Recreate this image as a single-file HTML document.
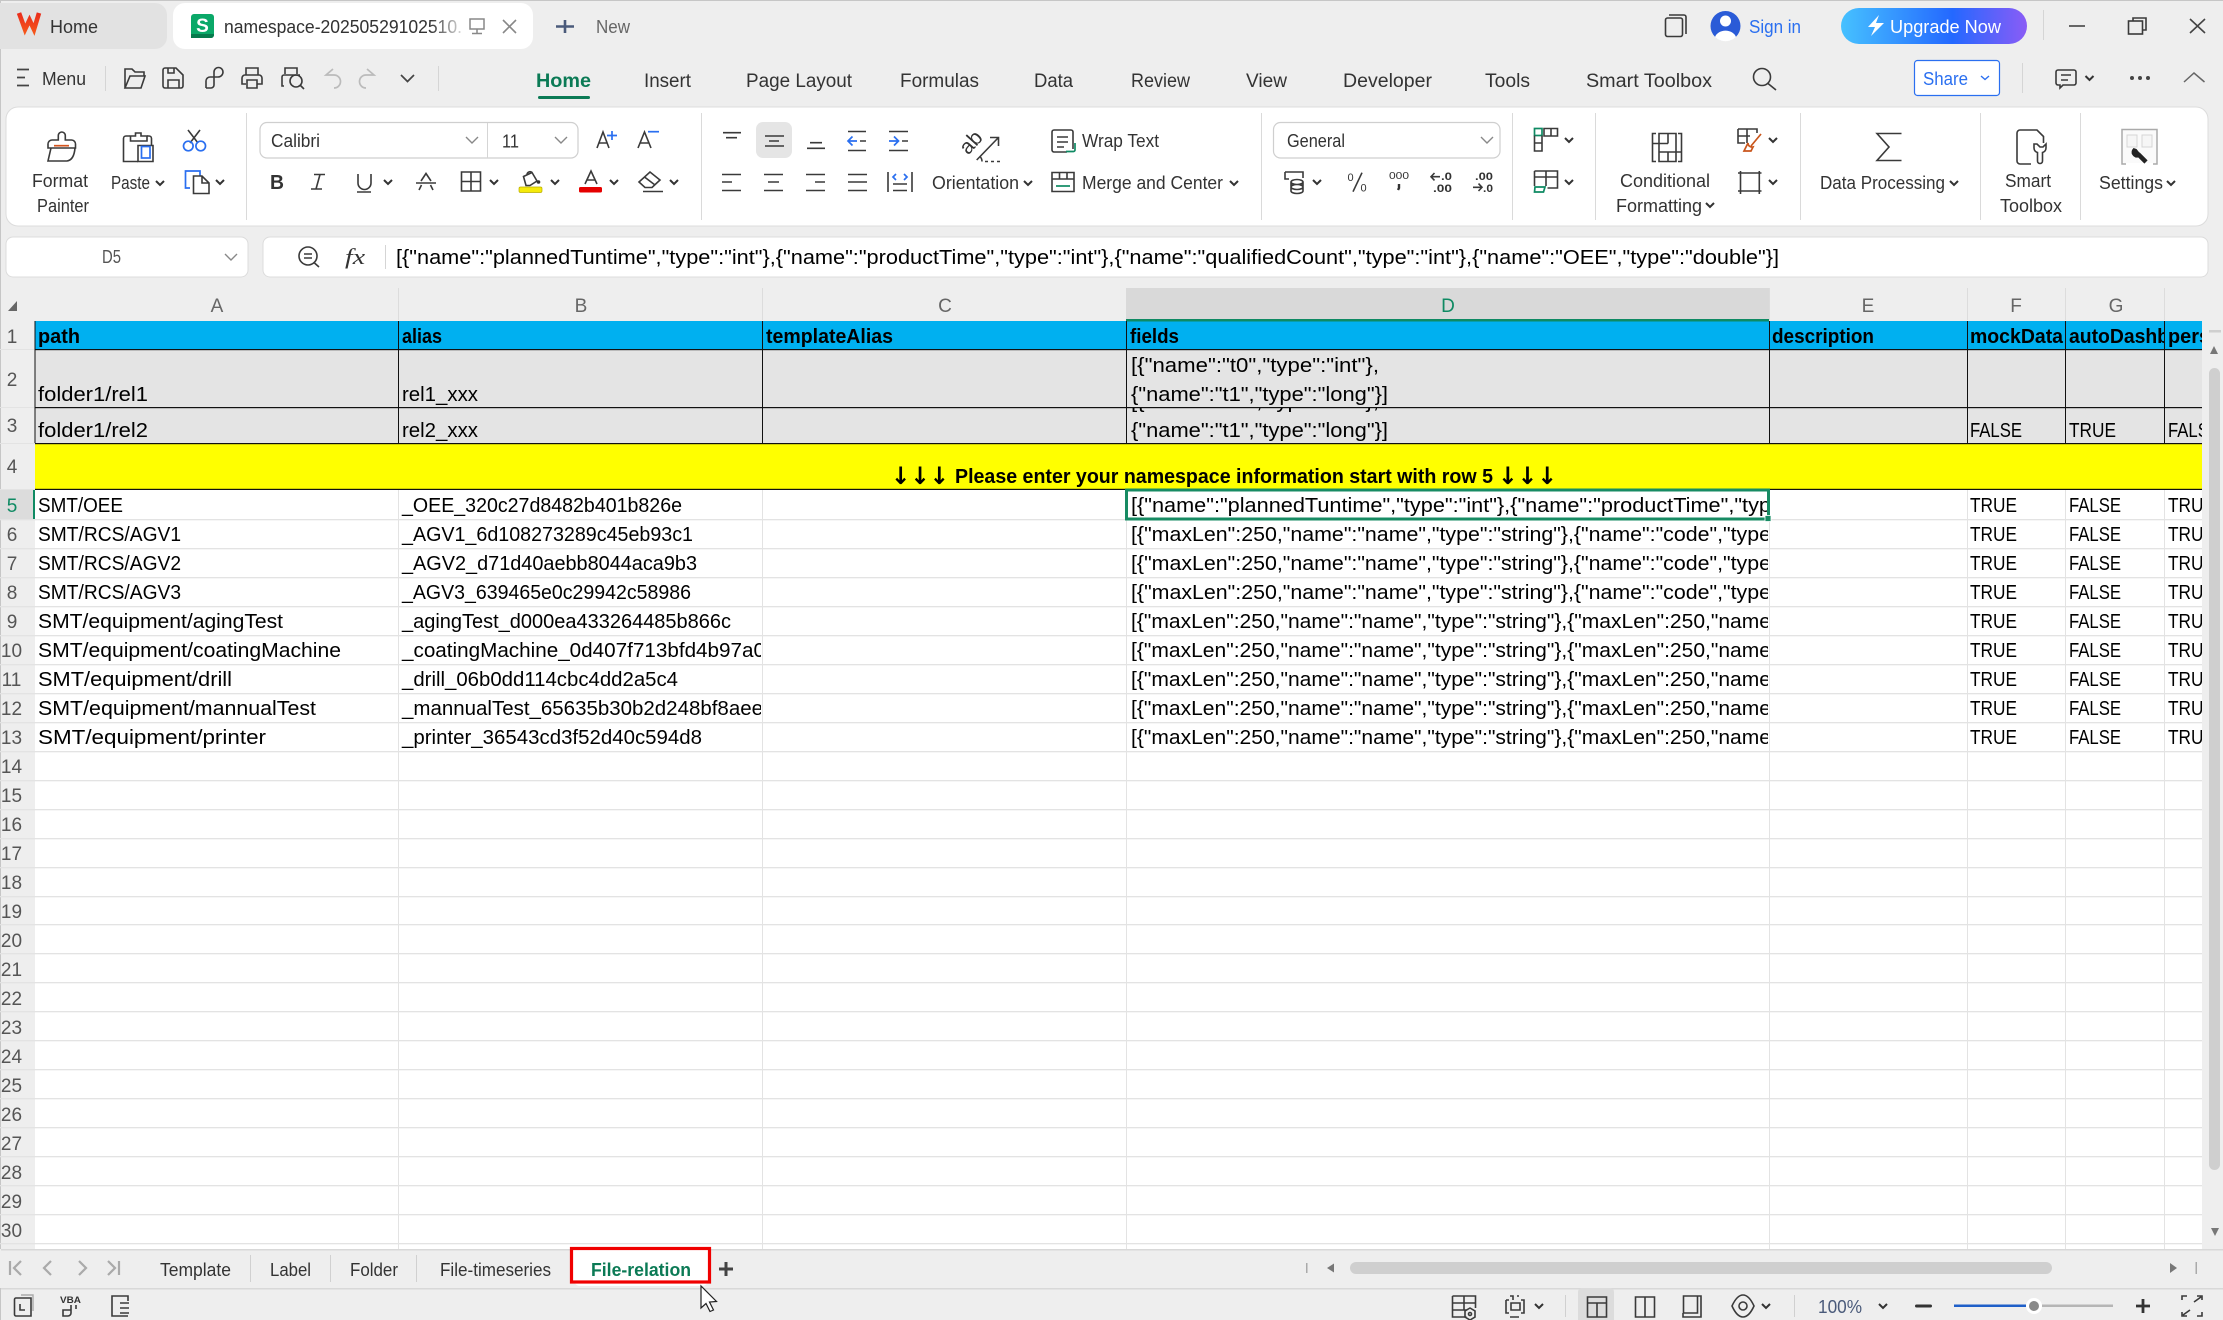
<!DOCTYPE html>
<html><head><meta charset="utf-8"><title>namespace</title>
<style>
html,body{margin:0;padding:0;background:#eee;width:2223px;height:1320px;overflow:hidden}
svg{display:block;font-family:"Liberation Sans",sans-serif}
.u{font-size:18px;fill:#333}
.c{font-size:20px;fill:#000}
.b{font-size:20px;fill:#000;font-weight:bold}
.r{font-size:19px;fill:#555;text-anchor:middle}
.h{font-size:19px;fill:#666;text-anchor:middle}
.i{fill:none;stroke:#3a3a3a;stroke-width:1.6}
.bl{fill:none;stroke:#2a6ff0;stroke-width:1.7}
.gn{fill:none;stroke:#0f8a63;stroke-width:1.7}
</style></head><body>
<svg width="2223" height="1320" viewBox="0 0 2223 1320" xmlns="http://www.w3.org/2000/svg">
<defs>
<path id="ch" d="M-4 -2L0 2L4 -2" fill="none" stroke="#333" stroke-width="2"/>
<path id="cl" d="M-6 -3L0 3L6 -3" fill="none" stroke="#888" stroke-width="1.4"/>
<linearGradient id="fade" gradientUnits="userSpaceOnUse" x1="430" y1="0" x2="462" y2="0"><stop offset="0" stop-color="#333"/><stop offset="1" stop-color="#ddd"/></linearGradient>
<linearGradient id="upg" gradientUnits="userSpaceOnUse" x1="1841" y1="0" x2="2027" y2="0"><stop offset="0" stop-color="#46c1ff"/><stop offset=".6" stop-color="#2468ff"/><stop offset="1" stop-color="#8a5cf6"/></linearGradient>
<linearGradient id="wps" gradientUnits="userSpaceOnUse" x1="0" y1="10" x2="0" y2="33"><stop offset="0" stop-color="#e8261c"/><stop offset="1" stop-color="#f5561a"/></linearGradient>
<clipPath id="cB"><rect x="399" y="321" width="362" height="930"/></clipPath>
<clipPath id="cD"><rect x="1127" y="321" width="641" height="930"/></clipPath>
<clipPath id="cG"><rect x="2066" y="321" width="98" height="130"/></clipPath>
<clipPath id="cH"><rect x="2165" y="321" width="37" height="930"/></clipPath>
<clipPath id="cR3"><rect x="1127" y="408" width="641" height="35"/></clipPath>
</defs>
<rect width="2223" height="1320" fill="#eeeeee"/>
<rect width="2223" height="1" fill="#c6c6c6"/><rect width="1" height="1320" fill="#c6c6c6"/>

<!-- title tabs -->
<path d="M0 3H155a12 12 0 0 1 12 12V37a12 12 0 0 1-12 12H0z" fill="#e2e2e2"/>
<path d="M19 13L25 29.500L29.500 20L34 29.500L39 13" fill="none" stroke="url(#wps)" stroke-width="4.600"/>
<text x="50" y="33" class="u" textLength="48" lengthAdjust="spacingAndGlyphs">Home</text>
<rect x="173" y="3" width="360" height="46" rx="12" fill="#fff"/>
<rect x="191" y="14" width="23" height="24" rx="3" fill="#0aa868"/><path d="M191 34h23v1a3 3 0 0 1-3 3h-20z" fill="#067a4c"/>
<text x="202.500" y="32" font-size="19" font-weight="bold" fill="#fff" text-anchor="middle">S</text>
<text x="224" y="33" font-size="18" fill="url(#fade)" textLength="238" lengthAdjust="spacingAndGlyphs">namespace-20250529102510.</text>
<path d="M470 19h14v10h-14zM477 29v4M472 33.500h10" fill="none" stroke="#888" stroke-width="1.5"/>
<path d="M503 20L516 33M516 20L503 33" fill="none" stroke="#888" stroke-width="1.6"/>
<path d="M565 20V33M556 26.500H574" fill="none" stroke="#4a5a7a" stroke-width="2.6"/>
<text x="596" y="33" font-size="18" fill="#666" textLength="34" lengthAdjust="spacingAndGlyphs">New</text>

<!-- top right -->
<path class="i" d="M1669 15h15a2 2 0 0 1 2 2v17"/><rect class="i" x="1665.500" y="18" width="17" height="18.500" rx="2"/>
<circle cx="1725.500" cy="26" r="15" fill="#2a5bd7"/><circle cx="1725.500" cy="21" r="5.500" fill="#fff"/><path d="M1715 37a11 9 0 0 1 21 0a15 15 0 0 1-21 0z" fill="#fff"/>
<text x="1749" y="33" font-size="18" fill="#2a6ff0" textLength="52" lengthAdjust="spacingAndGlyphs">Sign in</text>
<rect x="1841" y="8" width="186" height="36" rx="18" fill="url(#upg)"/>
<path d="M1879 15L1868 27H1875L1871 36L1884 23H1876Z" fill="#fff"/>
<text x="1890" y="33" font-size="18" fill="#fff" textLength="111" lengthAdjust="spacingAndGlyphs">Upgrade Now</text>
<rect x="2043" y="10" width="1" height="30" fill="#d5d5d5"/>
<path d="M2069 26h16" stroke="#444" stroke-width="1.6" fill="none"/>
<path class="i" d="M2133 21v-3h13v12h-3"/><rect class="i" x="2128.500" y="21" width="14" height="13"/>
<path d="M2190 19L2205 33M2205 19L2190 33" fill="none" stroke="#444" stroke-width="1.6"/>

<!-- menu row -->
<path d="M17 69.500h12M17 77.500h8M17 85.500h12" stroke="#444" stroke-width="1.8" fill="none"/>
<text x="42" y="85" font-size="18" fill="#333" textLength="44" lengthAdjust="spacingAndGlyphs">Menu</text>
<rect x="105" y="66" width="1" height="25" fill="#d5d5d5"/>
<path class="i" d="M125 88V69h7l3 3h9v4M125 88h16l4-12h-15z"/>
<path class="i" d="M166 68h10l7 7v11a2 2 0 0 1-2 2h-16a2 2 0 0 1-2-2V70a2 2 0 0 1 2-2h1M168 88V80h11v8M168 68v5h6v-5"/>
<path class="i" d="M206 88h5a3 3 0 0 0 3-3V72a4 4 0 0 1 9 0a5 5 0 0 1-5 5h-8a4 4 0 0 0-4 4v7"/>
<path class="i" d="M246 75v-7h12v7M245 75h14a3 3 0 0 1 3 3v6h-5M246 84h-4V78a3 3 0 0 1 3-3M247 80h10v8h-10z"/>
<path class="i" d="M285 74v-6h12v6M284 86h-2V77a2 2 0 0 1 2-2h16"/><circle class="i" cx="296" cy="81" r="6"/><path class="i" d="M300.500 85.500L304 89"/>
<path d="M333 69l-7 6h8a4 4 0 0 1 0 13" fill="none" stroke="#bbb" stroke-width="1.7"/>
<path d="M367 69l7 6h-8a4 4 0 0 0 0 13" fill="none" stroke="#bbb" stroke-width="1.7"/>
<path d="M401 75l6.500 6.500L414 75" fill="none" stroke="#444" stroke-width="1.7"/>
<rect x="438" y="66" width="1" height="25" fill="#d5d5d5"/>
<text x="536" y="87" font-size="19" font-weight="bold" fill="#0b7a55" textLength="55" lengthAdjust="spacingAndGlyphs">Home</text>
<rect x="538" y="96" width="52" height="3" rx="1.500" fill="#0b7a55"/>
<text x="644" y="87" font-size="19" fill="#333" textLength="47" lengthAdjust="spacingAndGlyphs">Insert</text>
<text x="746" y="87" font-size="19" fill="#333" textLength="106" lengthAdjust="spacingAndGlyphs">Page Layout</text>
<text x="900" y="87" font-size="19" fill="#333" textLength="79" lengthAdjust="spacingAndGlyphs">Formulas</text>
<text x="1034" y="87" font-size="19" fill="#333" textLength="39" lengthAdjust="spacingAndGlyphs">Data</text>
<text x="1131" y="87" font-size="19" fill="#333" textLength="59" lengthAdjust="spacingAndGlyphs">Review</text>
<text x="1246" y="87" font-size="19" fill="#333" textLength="41" lengthAdjust="spacingAndGlyphs">View</text>
<text x="1343" y="87" font-size="19" fill="#333" textLength="89" lengthAdjust="spacingAndGlyphs">Developer</text>
<text x="1485" y="87" font-size="19" fill="#333" textLength="45" lengthAdjust="spacingAndGlyphs">Tools</text>
<text x="1586" y="87" font-size="19" fill="#333" textLength="126" lengthAdjust="spacingAndGlyphs">Smart Toolbox</text>
<circle class="i" cx="1762" cy="77" r="8.500"/><path class="i" d="M1768 83.500L1776 90"/>
<rect x="1914.500" y="60.500" width="85" height="35" rx="3" fill="#fff" stroke="#2a6ff0" stroke-width="1.200"/>
<text x="1923" y="85" font-size="18" fill="#2a6ff0" textLength="45" lengthAdjust="spacingAndGlyphs">Share</text>
<path d="M1981 76l4 3.500 4-3.500" fill="none" stroke="#2a6ff0" stroke-width="1.400"/>
<rect x="2022" y="63" width="1" height="30" fill="#d5d5d5"/>
<path class="i" d="M2058 70h16a2 2 0 0 1 2 2v11a2 2 0 0 1-2 2h-11l-3 3v-3h-2a2 2 0 0 1-2-2V72a2 2 0 0 1 2-2zM2061 75h10M2061 80h7"/>
<use href="#ch" x="2089.500" y="78"/>
<circle cx="2132" cy="78" r="2" fill="#444"/><circle cx="2140" cy="78" r="2" fill="#444"/><circle cx="2148" cy="78" r="2" fill="#444"/>
<path d="M2184 82L2194 73L2204.500 82" fill="none" stroke="#666" stroke-width="1.500"/>

<!-- ribbon card -->
<rect x="6" y="107" width="2202" height="119" rx="12" fill="#fff" stroke="#dcdcdc" stroke-width="1"/>
<g fill="#dadada"><rect x="246" y="113" width="1" height="107"/><rect x="701" y="113" width="1" height="107"/><rect x="1261" y="113" width="1" height="107"/><rect x="1512" y="113" width="1" height="107"/><rect x="1595" y="113" width="1" height="107"/><rect x="1800" y="113" width="1" height="107"/><rect x="1980" y="113" width="1" height="107"/><rect x="2080" y="113" width="1" height="107"/></g>

<!-- format painter -->
<path class="i" d="M58.300 140V135.500a3.500 3.500 0 0 1 7 0V140h6.200a4 4 0 0 1 4 4v4H48v-4a4 4 0 0 1 4-4z"/>
<path class="i" d="M51 148L48 161H67Q74 160 75 148"/><path d="M54 145.700h15" stroke="#d4541e" stroke-width="1.700" fill="none"/>
<text x="32" y="187" class="u" textLength="56" lengthAdjust="spacingAndGlyphs">Format</text>
<text x="37" y="212" class="u" textLength="52" lengthAdjust="spacingAndGlyphs">Painter</text>
<!-- paste -->
<path class="i" d="M130 136h-4a2.500 2.500 0 0 0-2.500 2.500V161.500H138M147 136h2a2.500 2.500 0 0 1 2.500 2.500V145"/>
<path class="i" d="M130.500 141V136h5V133h5.500V136h6V141z"/>
<path class="i" d="M138 161.500h15V145.500H138z"/>
<rect class="bl" x="141.500" y="146.500" width="8.500" height="11.500"/>
<text x="111" y="189" class="u" textLength="39" lengthAdjust="spacingAndGlyphs">Paste</text><use href="#ch" x="160" y="183"/>
<!-- cut -->
<path class="i" d="M188 130L198 143M200 130L190 143"/><circle class="bl" cx="188.300" cy="146" r="4.800"/><circle class="bl" cx="200.700" cy="146" r="4.800"/>
<!-- copy -->
<path class="bl" d="M190 188H185.500V171H200V176"/>
<path class="i" d="M193.500 176H202L209 183V193.500H193.500ZM202 176V183H209"/><use href="#ch" x="220" y="182"/>
<!-- font box -->
<rect x="260" y="122.500" width="318" height="35.500" rx="7" fill="#fff" stroke="#cfcfcf" stroke-width="1.200"/>
<rect x="487" y="123" width="1" height="35" fill="#d5d5d5"/>
<text x="271" y="147" class="u" textLength="49" lengthAdjust="spacingAndGlyphs">Calibri</text><use href="#cl" x="472" y="140"/>
<text x="502" y="147.500" class="u" textLength="17" lengthAdjust="spacingAndGlyphs">11</text><use href="#cl" x="561" y="140"/>
<path class="i" d="M597 148L603 132L609 148M599 143h8"/><path class="bl" d="M607 135.500h10M612 131v9"/>
<path class="i" d="M638 148L644.500 132L651 148M640 143h9"/><path class="bl" d="M648 131.700h11"/>
<text x="270" y="189" font-size="20" font-weight="bold" fill="#333" textLength="14" lengthAdjust="spacingAndGlyphs">B</text>
<path class="i" d="M314 174.500h11M311 189h11M320 174.500L316 189"/>
<path class="i" d="M358 174v9a6.500 6.500 0 0 0 13 0v-9M357 192h14"/><use href="#ch" x="388" y="182"/>
<path class="i" d="M416 183h20M421 181L426 173.500L431 181M421.500 185L419 190M430.500 185L433 190"/>
<path class="i" d="M461.500 172h19v19h-19zM471 172v19M461.500 181.500h19"/><use href="#ch" x="494" y="182"/>
<path class="i" d="M523.500 176.500L532 172.500L537 181L530 185.500H526ZM527 174.500a3 3 0 0 1 5-2"/><circle cx="538.500" cy="182" r="1.800" fill="#333"/><rect x="519" y="187" width="23" height="5.500" rx="1.500" fill="#f5ea0a" stroke="#b8ad00" stroke-width=".7"/><use href="#ch" x="555" y="182"/>
<path class="i" d="M585 184L591 171L597 184M587 180h8"/><rect x="579" y="187" width="23" height="5.500" rx="1.500" fill="#e50000"/><use href="#ch" x="614" y="182"/>
<path class="i" d="M639 182L650 172L660 180L652 187.500H645ZM644.500 177L655 185M643 191.500h20"/><use href="#ch" x="674" y="182"/>
<!-- align -->
<rect x="756" y="122" width="36" height="36" rx="7" fill="#e5e5e5"/>
<g class="i"><path d="M723 132.700h18M726 137.700h11"/><path d="M765 136h19M769 141h10M765 146h19"/><path d="M807 148.300h18M810 142.700h12"/>
<path d="M848 131.500h18M848 150.500h18M860 141h6"/><path d="M889 131.500h19M889 150.500h19M902 141h6"/>
<path d="M722 174.500h19M722 182h10M722 190.500h19"/><path d="M764 174.500h19M768 182h11M764 190.500h19"/><path d="M806 174.500h19M815 182h10M806 190.500h19"/><path d="M848 174.500h19M848 182h19M848 190.500h19"/>
<path d="M888 172v20M912 172v20M893 184h14M893 190.500h14"/></g>
<path class="bl" d="M848 141h9M852.500 136.500L848 141L852.500 145.500M889 141h9M894 136.500L898.500 141L894 145.500M896 174l-3 3 3 3M904 174l3 3-3 3"/>
<!-- orientation -->
<text transform="rotate(-48 976 147)" x="976" y="147" font-size="21" fill="#333" text-anchor="middle">ab</text>
<path class="i" d="M976.700 160L998 138M990 137.500h8.500v8.500M982 161.500a7 7 0 0 0-2-5"/><path class="i" d="M985 161.500h3M991 161.500h3M997 161.500h3"/>
<text x="932" y="189" class="u" textLength="87" lengthAdjust="spacingAndGlyphs">Orientation</text><use href="#ch" x="1028" y="183"/>
<!-- wrap / merge -->
<path class="i" d="M1073 149V132a2 2 0 0 0-2-2h-17a2 2 0 0 0-2 2v18a2 2 0 0 0 2 2h13M1057 137h11M1057 142h11M1057 147h7"/><path class="gn" d="M1075 143v7a1.500 1.500 0 0 1-1.500 1.500H1066"/>
<text x="1082" y="147" class="u" textLength="77" lengthAdjust="spacingAndGlyphs">Wrap Text</text>
<path class="i" d="M1052 172.500h22v19h-22zM1052 179h22M1059.500 172.500v6.500M1067 172.500v6.500"/><path class="gn" d="M1056 186h14"/>
<text x="1082" y="189" class="u" textLength="141" lengthAdjust="spacingAndGlyphs">Merge and Center</text><use href="#ch" x="1234" y="183"/>
<!-- number -->
<rect x="1273.500" y="122.500" width="226.500" height="35.500" rx="7" fill="#fff" stroke="#cfcfcf" stroke-width="1.200"/>
<text x="1287" y="147" class="u" textLength="58" lengthAdjust="spacingAndGlyphs">General</text><use href="#cl" x="1487" y="140"/>
<path class="i" d="M1285 172h18v6M1285 172v7h4M1291 187a6 2.500 0 1 0 12 0a6 2.500 0 1 0-12 0M1291 187v4a6 2.500 0 0 0 12 0v-4M1291 182v4.500M1303 182v4.500M1291 182a6 2.500 0 0 1 12 0a6 2.500 0 0 1-12 0"/>
<use href="#ch" x="1317" y="182"/>
<path class="i" d="M1362 172.700L1353 191.700"/><text x="1347.500" y="181" font-size="11" fill="#333">0</text><text x="1360.500" y="191.500" font-size="11" fill="#333">0</text>
<text x="1389" y="179" font-size="10.500" fill="#333" textLength="20" lengthAdjust="spacingAndGlyphs">000</text><path d="M1399 184v4l-1 2" stroke="#333" stroke-width="2.400" fill="none"/>
<text x="1441" y="180" font-size="11" fill="#333" font-weight="bold" textLength="11" lengthAdjust="spacingAndGlyphs">.0</text><path class="i" d="M1431 176.700h9M1434.500 173L1431 176.700l3.500 3.700"/>
<text x="1433" y="192" font-size="11" fill="#333" font-weight="bold" textLength="19" lengthAdjust="spacingAndGlyphs">.00</text>
<text x="1475" y="180" font-size="11" fill="#333" font-weight="bold" textLength="18" lengthAdjust="spacingAndGlyphs">.00</text><path class="i" d="M1473 187.300h9M1478.500 183.600L1482 187.300l-3.500 3.700"/>
<text x="1483" y="192" font-size="11" fill="#333" font-weight="bold" textLength="10" lengthAdjust="spacingAndGlyphs">.0</text>
<!-- cells style -->
<rect class="gn" x="1534.500" y="128.500" width="7.500" height="7"/><path class="i" d="M1534.500 135.500v15.500h7.500v-15.500M1534.500 143h7.500M1544 128.500h13.500v7.500h-13.500zM1551 128.500v7.500"/><use href="#ch" x="1569" y="140"/>
<path class="i" d="M1534.500 171h23v17h-10M1534.500 171v15M1534.500 177h23M1546 171v15"/><path class="gn" d="M1535 187h10l-1.500 5H1534.500z"/><use href="#ch" x="1569" y="182"/>
<!-- conditional -->
<path class="i" d="M1656 133.500h-3.500v28h3.500M1678 133.500h3.500v28h-3.500M1659 133.500h17v28h-17zM1652.500 143.500H1668M1659 152H1681.500M1668 133.500V143.500M1668 152V161.500"/>
<text x="1620" y="187" class="u" textLength="90" lengthAdjust="spacingAndGlyphs">Conditional</text>
<text x="1616" y="212" class="u" textLength="86" lengthAdjust="spacingAndGlyphs">Formatting</text><use href="#ch" x="1710" y="205"/>
<path class="i" d="M1738 129h19v4M1738 129v14h7M1738 136h12M1747 129v14"/><path d="M1761 134L1751 146M1753 147a4 4 0 0 1-5-4l-4 8h7z" fill="none" stroke="#c9561c" stroke-width="1.700"/><use href="#ch" x="1773" y="140"/>
<path class="i" d="M1740.500 171v23M1759.300 171v23M1738 173h23.500M1738 191h23.500"/><use href="#ch" x="1773" y="182"/>
<!-- data processing -->
<path class="i" d="M1901.500 133.500H1877L1889 147L1877 160.500H1901.500"/>
<text x="1820" y="189" class="u" textLength="125" lengthAdjust="spacingAndGlyphs">Data Processing</text><use href="#ch" x="1954" y="183"/>
<!-- smart toolbox -->
<path class="i" d="M2031 164h-11a3 3 0 0 1-3-3V133a3 3 0 0 1 3-3h17l6.500 6.500V143"/>
<path d="M2034 144v4a5 5 0 0 0 3.500 4.500V161a2.500 2.500 0 0 0 5 0v-8.500a5 5 0 0 0 3.500-4.500v-4l-3 3h-3l-3-3z" fill="none" stroke="#3a3a3a" stroke-width="1.600"/>
<text x="2005" y="187" class="u" textLength="46" lengthAdjust="spacingAndGlyphs">Smart</text>
<text x="2000" y="212" class="u" textLength="62" lengthAdjust="spacingAndGlyphs">Toolbox</text>
<!-- settings -->
<path d="M2122 163V129.500H2157V163M2122 161.500v2.500h4M2157 161.500v2.500h-4" fill="#fafafa" stroke="#aaa" stroke-width="1.500"/>
<rect x="2127" y="135" width="10" height="12" fill="#f6f6f6" stroke="#d5d5d5"/><rect x="2142" y="135" width="10" height="12" fill="#f6f6f6" stroke="#d5d5d5"/>
<path d="M2138 154L2146 162" stroke="#222" stroke-width="4.500" fill="none"/><path d="M2132 150a5.500 5.500 0 0 0 7.500 7l1-3-4-5-3-1z" fill="#222"/>
<text x="2099" y="189" class="u" textLength="64" lengthAdjust="spacingAndGlyphs">Settings</text><use href="#ch" x="2171" y="183"/>

<!-- formula bar -->
<rect x="6" y="237" width="242" height="40" rx="7" fill="#fff" stroke="#dcdcdc"/>
<text x="102" y="263" font-size="18" fill="#555" textLength="19" lengthAdjust="spacingAndGlyphs">D5</text><use href="#cl" x="231" y="257"/>
<rect x="263" y="237" width="1945" height="40" rx="7" fill="#fff" stroke="#dcdcdc"/>
<circle class="i" cx="308" cy="256" r="9"/><path class="i" d="M304 254h8M304 258h8M314.500 263L319 267"/>
<text x="345" y="264" font-size="22" font-style="italic" font-family="Liberation Serif" fill="#333" textLength="20" lengthAdjust="spacingAndGlyphs">fx</text>
<rect x="385" y="245" width="1" height="24" fill="#d5d5d5"/>
<text x="396" y="264" class="c" fill="#111" textLength="1383" lengthAdjust="spacingAndGlyphs">[{"name":"plannedTuntime","type":"int"},{"name":"productTime","type":"int"},{"name":"qualifiedCount","type":"int"},{"name":"OEE","type":"double"}]</text>

<!-- sheet -->
<rect x="35" y="321" width="2167" height="928" fill="#fff"/>
<rect x="0" y="321" width="35" height="928" fill="#eeeeee"/><rect width="1" height="928" y="321" fill="#c6c6c6"/>
<rect x="35" y="288" width="2167" height="33" fill="#eeeeee"/>
<path d="M8 311h9v-10z" fill="#666"/>
<rect x="1126" y="288" width="643" height="32" fill="#d9d9d9"/>
<g fill="#dcdcdc"><rect x="398" y="288" width="1" height="32"/><rect x="762" y="288" width="1" height="32"/><rect x="1769" y="288" width="1" height="32"/><rect x="1967" y="288" width="1" height="32"/><rect x="2065" y="288" width="1" height="32"/><rect x="2164" y="288" width="1" height="32"/></g>
<text x="217" y="312" class="h">A</text><text x="581" y="312" class="h">B</text><text x="945" y="312" class="h">C</text><text x="1448" y="312" class="h" style="fill:#0f8a63">D</text><text x="1868" y="312" class="h">E</text><text x="2016" y="312" class="h">F</text><text x="2116" y="312" class="h">G</text>

<rect x="35" y="321" width="2167" height="28" fill="#00b0f0"/>
<rect x="35" y="350" width="2167" height="93" fill="#e4e4e4"/>
<rect x="35" y="444" width="2167" height="45" fill="#ffff00"/>
<rect x="1126" y="319" width="643" height="2.500" fill="#0f8a63"/>

<!-- light grid -->
<g fill="#e3e3e3">
<rect x="398" y="490" width="1" height="759"/><rect x="762" y="490" width="1" height="759"/><rect x="1126" y="490" width="1" height="759"/><rect x="1769" y="490" width="1" height="759"/><rect x="1967" y="490" width="1" height="759"/><rect x="2065" y="490" width="1" height="759"/><rect x="2164" y="490" width="1" height="759"/>
<rect y="519" x="0" width="2202" height="1.300"/><rect y="548" x="0" width="2202" height="1.300"/><rect y="577" x="0" width="2202" height="1.300"/><rect y="606" x="0" width="2202" height="1.300"/><rect y="635" x="0" width="2202" height="1.300"/><rect y="664" x="0" width="2202" height="1.300"/><rect y="693" x="0" width="2202" height="1.300"/><rect y="722" x="0" width="2202" height="1.300"/><rect y="751" x="0" width="2202" height="1.300"/><rect y="780" x="0" width="2202" height="1.300"/><rect y="809" x="0" width="2202" height="1.300"/><rect y="838" x="0" width="2202" height="1.300"/><rect y="867" x="0" width="2202" height="1.300"/><rect y="896" x="0" width="2202" height="1.300"/><rect y="924" x="0" width="2202" height="1.300"/><rect y="953" x="0" width="2202" height="1.300"/><rect y="982" x="0" width="2202" height="1.300"/><rect y="1011" x="0" width="2202" height="1.300"/><rect y="1040" x="0" width="2202" height="1.300"/><rect y="1069" x="0" width="2202" height="1.300"/><rect y="1098" x="0" width="2202" height="1.300"/><rect y="1127" x="0" width="2202" height="1.300"/><rect y="1156" x="0" width="2202" height="1.300"/><rect y="1185" x="0" width="2202" height="1.300"/><rect y="1214" x="0" width="2202" height="1.300"/><rect y="1243" x="0" width="2202" height="1.300"/>
<rect y="349" x="0" width="35" height="1"/><rect y="407" x="0" width="35" height="1"/><rect y="443" x="0" width="35" height="1"/><rect y="489" x="0" width="35" height="1"/>
</g>
<!-- dark grid -->
<g fill="#111">
<rect x="35" y="349" width="2167" height="1.200"/><rect x="35" y="407" width="2167" height="1.200"/><rect x="35" y="443" width="2167" height="1.200"/><rect x="35" y="488.800" width="2167" height="1.200"/>
<rect x="34.500" y="321" width="1" height="122"/><rect x="398" y="321" width="1" height="122"/><rect x="762" y="321" width="1" height="122"/><rect x="1126" y="321" width="1" height="122"/><rect x="1769" y="321" width="1" height="122"/><rect x="1967" y="321" width="1" height="122"/><rect x="2065" y="321" width="1" height="122"/><rect x="2164" y="321" width="1" height="122"/>
</g>
<rect x="0" y="490" width="34" height="29" fill="#dcdcdc"/><rect x="33" y="490" width="2" height="29" fill="#0f8a63"/>

<!-- row numbers -->
<text x="12" y="343" class="r">1</text><text x="12" y="386" class="r">2</text><text x="12" y="432" class="r">3</text><text x="12" y="473" class="r">4</text><text x="12" y="512" class="r" style="fill:#0f8a63">5</text>
<text x="12" y="541" class="r">6</text><text x="12" y="570" class="r">7</text><text x="12" y="599" class="r">8</text><text x="12" y="628" class="r">9</text><text x="11.500" y="657" class="r">10</text><text x="11.500" y="686" class="r">11</text><text x="11.500" y="715" class="r">12</text><text x="11.500" y="744" class="r">13</text><text x="11.500" y="773" class="r">14</text><text x="11.500" y="802" class="r">15</text><text x="11.500" y="831" class="r">16</text><text x="11.500" y="860" class="r">17</text><text x="11.500" y="889" class="r">18</text><text x="11.500" y="918" class="r">19</text><text x="11.500" y="947" class="r">20</text><text x="11.500" y="976" class="r">21</text><text x="11.500" y="1005" class="r">22</text><text x="11.500" y="1034" class="r">23</text><text x="11.500" y="1063" class="r">24</text><text x="11.500" y="1092" class="r">25</text><text x="11.500" y="1121" class="r">26</text><text x="11.500" y="1150" class="r">27</text><text x="11.500" y="1179" class="r">28</text><text x="11.500" y="1208" class="r">29</text><text x="11.500" y="1237" class="r">30</text>

<!-- header row -->
<text x="38" y="343" class="b" textLength="42" lengthAdjust="spacingAndGlyphs">path</text>
<text x="402" y="343" class="b" textLength="40" lengthAdjust="spacingAndGlyphs">alias</text>
<text x="766" y="343" class="b" textLength="127" lengthAdjust="spacingAndGlyphs">templateAlias</text>
<text x="1130" y="343" class="b" textLength="49" lengthAdjust="spacingAndGlyphs">fields</text>
<text x="1772" y="343" class="b" textLength="102" lengthAdjust="spacingAndGlyphs">description</text>
<text x="1970" y="343" class="b" textLength="93" lengthAdjust="spacingAndGlyphs">mockData</text>
<g clip-path="url(#cG)"><text x="2069" y="343" class="b" textLength="100" lengthAdjust="spacingAndGlyphs">autoDashb</text></g>
<g clip-path="url(#cH)"><text x="2168" y="343" class="b" textLength="42" lengthAdjust="spacingAndGlyphs">pers</text></g>

<!-- rows 2,3 -->
<text x="38" y="401" class="c" textLength="110" lengthAdjust="spacingAndGlyphs">folder1/rel1</text>
<text x="402" y="401" class="c" textLength="76" lengthAdjust="spacingAndGlyphs">rel1_xxx</text>
<text x="1131" y="372" class="c" textLength="248" lengthAdjust="spacingAndGlyphs">[{"name":"t0","type":"int"},</text>
<text x="1131" y="401" class="c" textLength="257" lengthAdjust="spacingAndGlyphs">{"name":"t1","type":"long"}]</text>
<text x="38" y="437" class="c" textLength="110" lengthAdjust="spacingAndGlyphs">folder1/rel2</text>
<text x="402" y="437" class="c" textLength="76" lengthAdjust="spacingAndGlyphs">rel2_xxx</text>
<g clip-path="url(#cR3)"><text x="1131" y="408" class="c" textLength="248" lengthAdjust="spacingAndGlyphs">[{"name":"t0","type":"int"},</text></g>
<text x="1131" y="437" class="c" textLength="257" lengthAdjust="spacingAndGlyphs">{"name":"t1","type":"long"}]</text>
<text x="1970" y="437" class="c" textLength="52" lengthAdjust="spacingAndGlyphs">FALSE</text>
<text x="2069" y="437" class="c" textLength="47" lengthAdjust="spacingAndGlyphs">TRUE</text>
<g clip-path="url(#cH)"><text x="2168" y="437" class="c" textLength="52" lengthAdjust="spacingAndGlyphs">FALSE</text></g>
<!-- row 4 -->
<text x="891" y="484" font-size="24" font-weight="bold" fill="#000" font-family="'DejaVu Sans',sans-serif" textLength="58" lengthAdjust="spacingAndGlyphs">↓↓↓</text>
<text x="955" y="483" class="b" textLength="538" lengthAdjust="spacingAndGlyphs">Please enter your namespace information start with row 5</text>
<text x="1498" y="484" font-size="24" font-weight="bold" fill="#000" font-family="'DejaVu Sans',sans-serif" textLength="59" lengthAdjust="spacingAndGlyphs">↓↓↓</text>

<!-- data rows -->
<text x="38" y="512" class="c" textLength="85" lengthAdjust="spacingAndGlyphs">SMT/OEE</text>
<text x="38" y="541" class="c" textLength="143" lengthAdjust="spacingAndGlyphs">SMT/RCS/AGV1</text>
<text x="38" y="570" class="c" textLength="143" lengthAdjust="spacingAndGlyphs">SMT/RCS/AGV2</text>
<text x="38" y="599" class="c" textLength="143" lengthAdjust="spacingAndGlyphs">SMT/RCS/AGV3</text>
<text x="38" y="628" class="c" textLength="245" lengthAdjust="spacingAndGlyphs">SMT/equipment/agingTest</text>
<text x="38" y="657" class="c" textLength="303" lengthAdjust="spacingAndGlyphs">SMT/equipment/coatingMachine</text>
<text x="38" y="686" class="c" textLength="194" lengthAdjust="spacingAndGlyphs">SMT/equipment/drill</text>
<text x="38" y="715" class="c" textLength="278" lengthAdjust="spacingAndGlyphs">SMT/equipment/mannualTest</text>
<text x="38" y="744" class="c" textLength="228" lengthAdjust="spacingAndGlyphs">SMT/equipment/printer</text>
<g clip-path="url(#cB)">
<text x="402" y="512" class="c" textLength="280" lengthAdjust="spacingAndGlyphs">_OEE_320c27d8482b401b826e</text>
<text x="402" y="541" class="c" textLength="291" lengthAdjust="spacingAndGlyphs">_AGV1_6d108273289c45eb93c1</text>
<text x="402" y="570" class="c" textLength="295" lengthAdjust="spacingAndGlyphs">_AGV2_d71d40aebb8044aca9b3</text>
<text x="402" y="599" class="c" textLength="289" lengthAdjust="spacingAndGlyphs">_AGV3_639465e0c29942c58986</text>
<text x="402" y="628" class="c" textLength="329" lengthAdjust="spacingAndGlyphs">_agingTest_d000ea433264485b866c</text>
<text x="402" y="657" class="c" textLength="363" lengthAdjust="spacingAndGlyphs">_coatingMachine_0d407f713bfd4b97a0</text>
<text x="402" y="686" class="c" textLength="276" lengthAdjust="spacingAndGlyphs">_drill_06b0dd114cbc4dd2a5c4</text>
<text x="402" y="715" class="c" textLength="361" lengthAdjust="spacingAndGlyphs">_mannualTest_65635b30b2d248bf8aee</text>
<text x="402" y="744" class="c" textLength="300" lengthAdjust="spacingAndGlyphs">_printer_36543cd3f52d40c594d8</text>
</g>
<g clip-path="url(#cD)">
<text x="1131" y="512" class="c" textLength="640" lengthAdjust="spacingAndGlyphs">[{"name":"plannedTuntime","type":"int"},{"name":"productTime","typ</text>
<text x="1131" y="541" class="c" textLength="640" lengthAdjust="spacingAndGlyphs">[{"maxLen":250,"name":"name","type":"string"},{"name":"code","type</text>
<text x="1131" y="570" class="c" textLength="640" lengthAdjust="spacingAndGlyphs">[{"maxLen":250,"name":"name","type":"string"},{"name":"code","type</text>
<text x="1131" y="599" class="c" textLength="640" lengthAdjust="spacingAndGlyphs">[{"maxLen":250,"name":"name","type":"string"},{"name":"code","type</text>
<text x="1131" y="628" class="c" textLength="640" lengthAdjust="spacingAndGlyphs">[{"maxLen":250,"name":"name","type":"string"},{"maxLen":250,"name</text>
<text x="1131" y="657" class="c" textLength="640" lengthAdjust="spacingAndGlyphs">[{"maxLen":250,"name":"name","type":"string"},{"maxLen":250,"name</text>
<text x="1131" y="686" class="c" textLength="640" lengthAdjust="spacingAndGlyphs">[{"maxLen":250,"name":"name","type":"string"},{"maxLen":250,"name</text>
<text x="1131" y="715" class="c" textLength="640" lengthAdjust="spacingAndGlyphs">[{"maxLen":250,"name":"name","type":"string"},{"maxLen":250,"name</text>
<text x="1131" y="744" class="c" textLength="640" lengthAdjust="spacingAndGlyphs">[{"maxLen":250,"name":"name","type":"string"},{"maxLen":250,"name</text>
</g>
<text x="1970" y="512" class="c" textLength="47" lengthAdjust="spacingAndGlyphs">TRUE</text><text x="2069" y="512" class="c" textLength="52" lengthAdjust="spacingAndGlyphs">FALSE</text>
<text x="1970" y="541" class="c" textLength="47" lengthAdjust="spacingAndGlyphs">TRUE</text><text x="2069" y="541" class="c" textLength="52" lengthAdjust="spacingAndGlyphs">FALSE</text>
<text x="1970" y="570" class="c" textLength="47" lengthAdjust="spacingAndGlyphs">TRUE</text><text x="2069" y="570" class="c" textLength="52" lengthAdjust="spacingAndGlyphs">FALSE</text>
<text x="1970" y="599" class="c" textLength="47" lengthAdjust="spacingAndGlyphs">TRUE</text><text x="2069" y="599" class="c" textLength="52" lengthAdjust="spacingAndGlyphs">FALSE</text>
<text x="1970" y="628" class="c" textLength="47" lengthAdjust="spacingAndGlyphs">TRUE</text><text x="2069" y="628" class="c" textLength="52" lengthAdjust="spacingAndGlyphs">FALSE</text>
<text x="1970" y="657" class="c" textLength="47" lengthAdjust="spacingAndGlyphs">TRUE</text><text x="2069" y="657" class="c" textLength="52" lengthAdjust="spacingAndGlyphs">FALSE</text>
<text x="1970" y="686" class="c" textLength="47" lengthAdjust="spacingAndGlyphs">TRUE</text><text x="2069" y="686" class="c" textLength="52" lengthAdjust="spacingAndGlyphs">FALSE</text>
<text x="1970" y="715" class="c" textLength="47" lengthAdjust="spacingAndGlyphs">TRUE</text><text x="2069" y="715" class="c" textLength="52" lengthAdjust="spacingAndGlyphs">FALSE</text>
<text x="1970" y="744" class="c" textLength="47" lengthAdjust="spacingAndGlyphs">TRUE</text><text x="2069" y="744" class="c" textLength="52" lengthAdjust="spacingAndGlyphs">FALSE</text>
<g clip-path="url(#cH)">
<text x="2168" y="512" class="c" textLength="47" lengthAdjust="spacingAndGlyphs">TRUE</text><text x="2168" y="541" class="c" textLength="47" lengthAdjust="spacingAndGlyphs">TRUE</text><text x="2168" y="570" class="c" textLength="47" lengthAdjust="spacingAndGlyphs">TRUE</text><text x="2168" y="599" class="c" textLength="47" lengthAdjust="spacingAndGlyphs">TRUE</text><text x="2168" y="628" class="c" textLength="47" lengthAdjust="spacingAndGlyphs">TRUE</text><text x="2168" y="657" class="c" textLength="47" lengthAdjust="spacingAndGlyphs">TRUE</text><text x="2168" y="686" class="c" textLength="47" lengthAdjust="spacingAndGlyphs">TRUE</text><text x="2168" y="715" class="c" textLength="47" lengthAdjust="spacingAndGlyphs">TRUE</text><text x="2168" y="744" class="c" textLength="47" lengthAdjust="spacingAndGlyphs">TRUE</text>
</g>
<!-- selection -->
<rect x="1126.500" y="490" width="642" height="29" fill="none" stroke="#178b63" stroke-width="3"/>
<rect x="1765" y="515.500" width="6" height="6" fill="#178b63" stroke="#fff" stroke-width=".8"/>

<!-- v scrollbar -->
<rect x="2202" y="288" width="21" height="961" fill="#eeeeee"/>
<rect x="2209" y="330" width="12" height="2.500" fill="#cfcfcf"/>
<path d="M2214 346l-4 8h8z" fill="#777"/>
<rect x="2209" y="368" width="11" height="802" rx="5.500" fill="#cfcfcf"/>
<path d="M2215 1236l-4-8h8z" fill="#777"/>

<!-- tab bar -->
<rect x="0" y="1249" width="2223" height="39" fill="#eeeeee"/>
<rect x="1" y="1249" width="2222" height="1.500" fill="#d8d8d8"/>
<rect x="1" y="1288" width="2222" height="1.500" fill="#d8d8d8"/>
<g fill="none" stroke="#aaa" stroke-width="2.200"><path d="M10 1261v14M21 1261l-7 7 7 7M51 1261l-7 7 7 7M79 1261l7 7-7 7M108 1261l7 7-7 7M119 1261v14"/></g>
<text x="160" y="1276" font-size="18" fill="#333" textLength="71" lengthAdjust="spacingAndGlyphs">Template</text>
<rect x="250" y="1255" width="1" height="27" fill="#d0d0d0"/>
<text x="270" y="1276" font-size="18" fill="#333" textLength="41" lengthAdjust="spacingAndGlyphs">Label</text>
<rect x="330" y="1255" width="1" height="27" fill="#d0d0d0"/>
<text x="350" y="1276" font-size="18" fill="#333" textLength="48" lengthAdjust="spacingAndGlyphs">Folder</text>
<rect x="416" y="1255" width="1" height="27" fill="#d0d0d0"/>
<text x="440" y="1276" font-size="18" fill="#333" textLength="111" lengthAdjust="spacingAndGlyphs">File-timeseries</text>
<path d="M574 1249H708V1280a6 6 0 0 1-6 6H580a6 6 0 0 1-6-6z" fill="#fff"/>
<rect x="571.500" y="1248.500" width="138" height="33.500" fill="#fff" stroke="#f00000" stroke-width="3.200"/>
<text x="591" y="1276" font-size="18" font-weight="bold" fill="#0b7a55" textLength="100" lengthAdjust="spacingAndGlyphs">File-relation</text>
<path d="M726 1262v14M719 1269h14" stroke="#444" stroke-width="3" fill="none"/>
<rect x="1306" y="1263" width="1.500" height="10" fill="#aaa"/>
<path d="M1327 1268l7-4.500v9z" fill="#777"/>
<rect x="1350" y="1262" width="702" height="12" rx="6" fill="#cfcfcf"/>
<path d="M2177 1268l-7-5v10z" fill="#777"/>
<rect x="2195.500" y="1262" width="1.500" height="12" fill="#aaa"/>
<!-- cursor -->
<path d="M701 1286V1308L706 1303.500L710 1311.500L713.500 1310L709.500 1302L716.500 1301.500Z" fill="#fff" stroke="#222" stroke-width="1.200"/>

<!-- status bar -->
<path class="i" d="M18 1298h13v18h-15a1.500 1.500 0 0 1-1.500-1.500v-15A1.500 1.500 0 0 1 16 1298h2"/><path d="M21 1295h12v16" fill="none" stroke="#aaa" stroke-width="1.400"/><path class="i" d="M20 1304v6h5"/>
<text x="60" y="1303" font-size="9" font-weight="bold" fill="#333" textLength="21" lengthAdjust="spacingAndGlyphs">VBA</text><path class="i" d="M71 1305v8a3 3 0 0 1-3 3h-5v-6h8M76 1305v4"/>
<path class="i" d="M128 1316h-16v-20h16v5M120 1303h9M120 1308h9M120 1313h9"/>
<path class="i" d="M1452.500 1296h23v12M1452.500 1296v21h14M1452.500 1303h23M1452.500 1310h14M1464 1296v14"/><path class="i" d="M1470 1308l5 3v6l-5 3-5-3v-6z"/><circle class="i" cx="1470" cy="1314" r="1.500"/>
<path class="i" d="M1506 1300h3M1521 1300h3v13h-3M1509 1313h-3v-13M1510 1296h3v4M1517 1296h2M1511 1303h9v7h-9zM1510 1317h9"/><use href="#ch" x="1539" y="1306"/>
<rect x="1565" y="1295" width="1" height="22" fill="#d0d0d0"/>
<path d="M1578 1292a4 4 0 0 1 4-4h28a4 4 0 0 1 4 4v28h-36z" fill="#dcdcdc"/>
<path class="i" d="M1587.500 1297h19v20h-19zM1587.500 1303h19M1597 1303v14"/>
<path class="i" d="M1635.500 1297h19v20h-19zM1645 1297v20"/>
<path class="i" d="M1687 1296h14v21h-18v-4M1683.500 1296v17h14V1296z"/>
<path class="i" d="M1732 1306Q1737 1295 1743 1295Q1749 1295 1754 1306Q1749 1317 1743 1317Q1737 1317 1732 1306z"/><circle class="i" cx="1743" cy="1306" r="4"/><use href="#ch" x="1766" y="1306"/>
<rect x="1794" y="1295" width="1" height="22" fill="#d0d0d0"/>
<text x="1818" y="1313" font-size="18" fill="#4a5a7a" textLength="44" lengthAdjust="spacingAndGlyphs">100%</text><use href="#ch" x="1883" y="1306"/>
<rect x="1915" y="1304.500" width="17" height="3" rx="1.500" fill="#333"/>
<rect x="1954" y="1304.500" width="72" height="2.500" fill="#1f5fc8"/>
<rect x="2042" y="1304.500" width="71" height="2.500" fill="#b5b5b5"/>
<circle cx="2034" cy="1306" r="8" fill="#fff"/><circle cx="2034" cy="1306" r="5" fill="#8a8a8a"/>
<path d="M2143 1299v14M2136 1306h14" stroke="#333" stroke-width="2.800" fill="none"/>
<path class="i" d="M2182 1300v-4h5M2202 1300v-4h-5M2182 1312v4h5M2202 1312v4h-5M2194 1302l7-5M2190 1310l-7 5"/>
</svg>
</body></html>
